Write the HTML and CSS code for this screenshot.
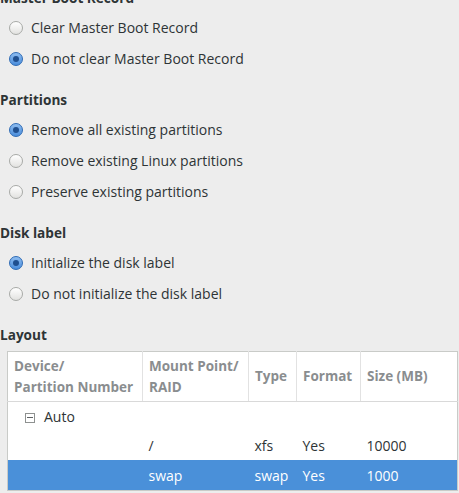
FILE: index.html
```html
<!DOCTYPE html>
<html lang="en">
<head>
    <meta charset="UTF-8">
    <title>Partitioning</title>
    <link rel="stylesheet" href="styles.css">
</head>
<body>
    <div class="page">
        <div class="section first">
            <h2>Master Boot Record</h2>
            <label class="option"><span class="radio"></span>Clear Master Boot Record</label>
            <label class="option"><span class="radio checked"></span>Do not clear Master Boot Record</label>
        </div>
        <div class="section">
            <h2>Partitions</h2>
            <label class="option"><span class="radio checked"></span>Remove all existing partitions</label>
            <label class="option"><span class="radio"></span>Remove existing Linux partitions</label>
            <label class="option"><span class="radio"></span>Preserve existing partitions</label>
        </div>
        <div class="section">
            <h2>Disk label</h2>
            <label class="option"><span class="radio checked"></span>Initialize the disk label</label>
            <label class="option"><span class="radio"></span>Do not initialize the disk label</label>
        </div>
        <div class="section">
            <h2 class="layout-title">Layout</h2>
            <table class="layout">
                <thead>
                    <tr>
                        <th class="c1">Device/<br>Partition Number</th>
                        <th class="c2">Mount Point/<br>RAID</th>
                        <th class="c3">Type</th>
                        <th class="c4">Format</th>
                        <th class="c5">Size (MB)</th>
                    </tr>
                </thead>
                <tbody>
                    <tr>
                        <td colspan="5" class="group"><span class="expander"></span>Auto</td>
                    </tr>
                    <tr>
                        <td></td>
                        <td>/</td>
                        <td>xfs</td>
                        <td>Yes</td>
                        <td>10000</td>
                    </tr>
                    <tr class="selected">
                        <td></td>
                        <td>swap</td>
                        <td>swap</td>
                        <td>Yes</td>
                        <td>1000</td>
                    </tr>
                </tbody>
            </table>
        </div>
    </div>
</body>
</html>
```

FILE: styles.css
```css
body {
    margin: 0;
    font-family: "Open Sans", "DejaVu Sans", sans-serif;
    font-size: 14px;
    color: #2e3436;
    background-color: #ededed;
    overflow: hidden;
}
.page {
    margin-top: -12px;
}
.section {
    margin-bottom: 16px;
}
.section h2 {
    margin: 0 0 4px 0;
    height: 20px;
    line-height: 20px;
    font-size: 13.6px;
    font-weight: bold;
}
.option {
    display: flex;
    align-items: center;
    height: 31px;
    padding-left: 9px;
}
.radio {
    box-sizing: border-box;
    width: 14px;
    height: 14px;
    margin-right: 8px;
    border: 1px solid #a8aaa7;
    border-radius: 50%;
    background: linear-gradient(#ffffff, #e2e2e0);
    position: relative;
}
.radio.checked {
    border-color: #2c6ab5;
    background: linear-gradient(#8dbcf0, #4a8ddb);
}
.radio.checked::after {
    content: "";
    position: absolute;
    left: 3px;
    top: 3px;
    width: 6px;
    height: 6px;
    border-radius: 50%;
    background-color: #1f4f8f;
}
.layout-title {
    margin-bottom: 6px !important;
}
.layout {
    margin-left: 7px;
    width: 451px;
    border-collapse: collapse;
    background-color: #fff;
    border: 1px solid #c9cbc8;
}
.layout th {
    height: 49px;
    padding: 0 6px;
    text-align: left;
    vertical-align: middle;
    font-size: 13.5px;
    font-weight: bold;
    color: #8a8d8f;
    line-height: 21px;
    border-left: 1px solid #e2e2e2;
    border-bottom: 1px solid #d9d9d9;
}
.layout th.c1 { width: 122px; border-left: none; }
.layout th.c2 { width: 93px; }
.layout th.c3 { width: 35px; }
.layout th.c4 { width: 51px; }
.layout td {
    height: 30px;
    padding: 0 6px;
    white-space: nowrap;
}
.layout td.group {
    height: 28px;
    padding-left: 17px;
}
.expander {
    display: inline-block;
    box-sizing: border-box;
    width: 10px;
    height: 10px;
    margin-right: 9px;
    border: 1px solid #8e9190;
    position: relative;
    vertical-align: -1px;
}
.expander::after {
    content: "";
    position: absolute;
    left: 1px;
    top: 3px;
    width: 6px;
    height: 1px;
    background-color: #5d6163;
}
.layout tr.selected td {
    background-color: #4a90d9;
    color: #fff;
}
```
